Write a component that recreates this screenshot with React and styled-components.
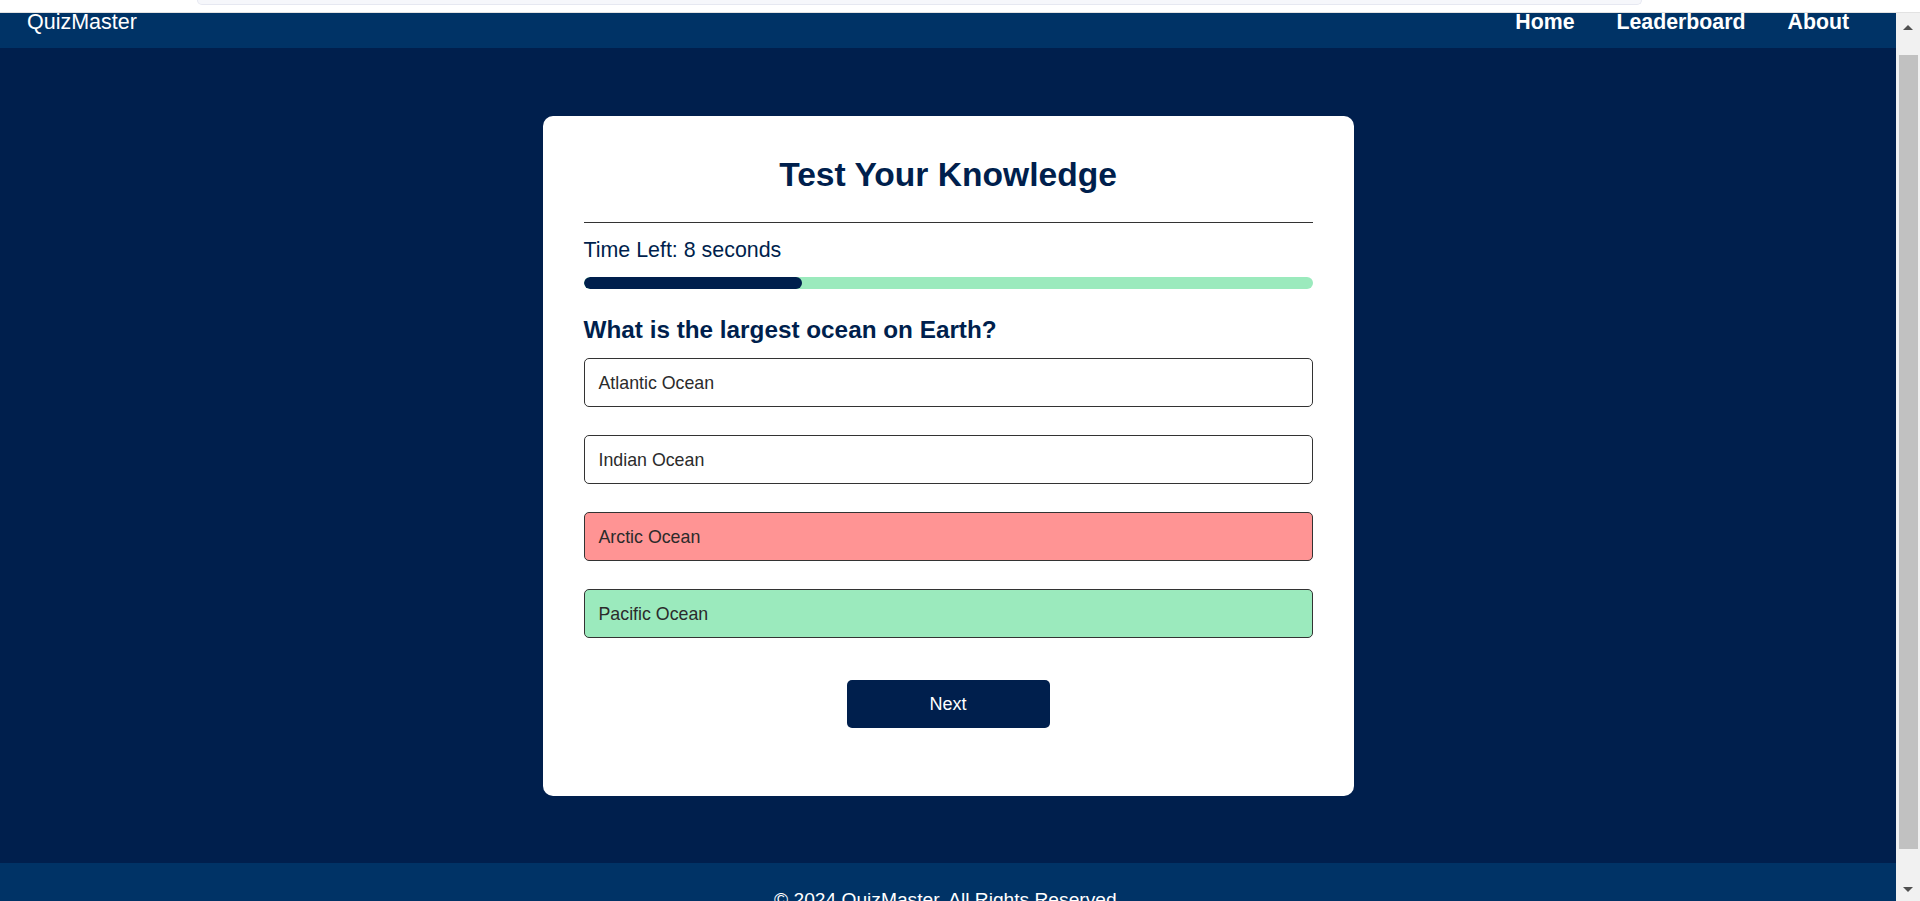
import React from "react";
import styled, { createGlobalStyle } from "styled-components";

const GlobalStyle = createGlobalStyle`
  html, body {
    margin: 0;
    padding: 0;
    overflow: hidden;
    font-family: "Liberation Sans", Arial, sans-serif;
  }
`;

const Shell = styled.div`
  display: flex;
  flex-direction: column;
  height: 100vh;
`;

const TopStrip = styled.div`
  height: 12px;
  background: #fff;
  border-bottom: 1px solid #e2e2e2;
  padding-left: 197px;
`;

const Popover = styled.div`
  width: 1443px;
  height: 4px;
  background: #f6f7fb;
  border: 1px solid #e6e8f1;
  border-top: none;
  border-radius: 0 0 6px 6px;
`;

const Body = styled.div`
  flex: 1;
  display: flex;
  min-height: 0;
`;

const Viewport = styled.div`
  flex: 1;
  min-width: 0;
  display: flex;
  flex-direction: column;
  overflow: hidden;
  background: #001f4d;
`;

const Nav = styled.nav`
  flex: none;
  height: 35px;
  background: #003366;
  color: #fff;
  display: flex;
  justify-content: space-between;
  align-items: flex-start;
  padding: 0 47px 0 27px;
`;

const Brand = styled.div`
  font-size: 21.5px;
  line-height: 18px;
`;

const NavLinks = styled.div`
  display: flex;
  gap: 42px;
`;

const NavLink = styled.a`
  font-size: 21.3px;
  line-height: 18px;
  font-weight: bold;
  color: #fff;
  text-decoration: none;
`;

const Main = styled.main`
  flex: none;
  display: flex;
  justify-content: center;
  padding: 68px 0 67px;
`;

const Card = styled.div`
  width: 811px;
  box-sizing: border-box;
  background: #fff;
  border-radius: 10px;
  padding: 41px 41px 68px;
  display: flex;
  flex-direction: column;
`;

const Title = styled.h1`
  margin: 0;
  font-size: 33.6px;
  line-height: 36px;
  text-align: center;
  color: #001f4d;
`;

const Divider = styled.div`
  height: 1px;
  background: #333;
  margin-top: 29px;
`;

const Timer = styled.p`
  margin: 15px 0 0;
  font-size: 21.4px;
  line-height: 24px;
  color: #001f4d;
`;

const Track = styled.div`
  margin-top: 15px;
  height: 12px;
  border-radius: 6px;
  background: #9beabd;
  overflow: hidden;
`;

const Fill = styled.div`
  height: 100%;
  border-radius: 6px;
  background: #001f4d;
`;

const Question = styled.h2`
  margin: 27px 0 0;
  font-size: 24.3px;
  line-height: 28px;
  color: #001f4d;
`;

const Options = styled.div`
  margin-top: 14px;
  display: flex;
  flex-direction: column;
  gap: 28px;
`;

const Option = styled.div`
  height: 49px;
  box-sizing: border-box;
  border: 1px solid #333;
  border-radius: 5px;
  padding: 1px 14px 0;
  display: flex;
  align-items: center;
  font-size: 17.8px;
  color: #2b2b2b;
  background: ${p =>
    p.state === "wrong" ? "#ff9494" : p.state === "right" ? "#9beabd" : "#fff"};
`;

const NextButton = styled.button`
  align-self: center;
  margin-top: 42px;
  width: 203px;
  height: 48px;
  border: none;
  border-radius: 5px;
  background: #001f4d;
  color: #fff;
  font-family: inherit;
  font-size: 18px;
  cursor: pointer;
`;

const Footer = styled.footer`
  flex: none;
  background: #003366;
  color: #fff;
  text-align: center;
  padding: 26px 0 20px;
  font-size: 19.2px;
  line-height: 22px;
`;

const Scrollbar = styled.div`
  width: 24px;
  flex: none;
  background: #f1f1f1;
  display: flex;
  flex-direction: column;
`;

const ArrowBox = styled.div`
  height: ${p => p.h}px;
  display: flex;
  align-items: center;
  justify-content: center;
`;

const Arrow = styled.div`
  width: 0;
  height: 0;
  border-left: 5px solid transparent;
  border-right: 5px solid transparent;
  ${p =>
    p.down
      ? "border-top: 5px solid #505050;"
      : "border-bottom: 5px solid #505050;"}
`;

const Thumb = styled.div`
  flex: 1;
  margin: 14px 2px 28px 3px;
  background: #c1c1c1;
`;

const options = [
  { label: "Atlantic Ocean" },
  { label: "Indian Ocean" },
  { label: "Arctic Ocean", state: "wrong" },
  { label: "Pacific Ocean", state: "right" },
];

export default function App() {
  const timeLeft = 8;
  const progress = 30;

  return (
    <Shell>
      <GlobalStyle />
      <TopStrip>
        <Popover />
      </TopStrip>
      <Body>
        <Viewport>
          <Nav>
            <Brand>QuizMaster</Brand>
            <NavLinks>
              <NavLink href="#">Home</NavLink>
              <NavLink href="#">Leaderboard</NavLink>
              <NavLink href="#">About</NavLink>
            </NavLinks>
          </Nav>
          <Main>
            <Card>
              <Title>Test Your Knowledge</Title>
              <Divider />
              <Timer>Time Left: {timeLeft} seconds</Timer>
              <Track>
                <Fill style={{ width: `${progress}%` }} />
              </Track>
              <Question>What is the largest ocean on Earth?</Question>
              <Options>
                {options.map(o => (
                  <Option key={o.label} state={o.state}>
                    {o.label}
                  </Option>
                ))}
              </Options>
              <NextButton>Next</NextButton>
            </Card>
          </Main>
          <Footer>© 2024 QuizMaster. All Rights Reserved.</Footer>
        </Viewport>
        <Scrollbar>
          <ArrowBox h={28}>
            <Arrow />
          </ArrowBox>
          <Thumb />
          <ArrowBox h={24}>
            <Arrow down />
          </ArrowBox>
        </Scrollbar>
      </Body>
    </Shell>
  );
}
